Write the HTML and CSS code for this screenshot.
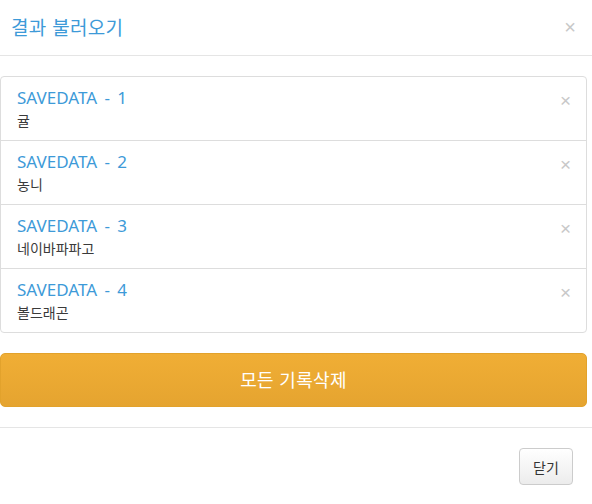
FILE: index.html
```html
<!DOCTYPE html>
<html lang="ko">
<head>
<meta charset="utf-8">
<link rel="stylesheet" href="styles.css">
</head>
<body>
<div class="modal">
  <div class="modal-header">
    <h4 class="modal-title">결과 불러오기</h4>
    <span class="close">×</span>
  </div>
  <div class="modal-body">
    <ul class="list-group">
      <li class="list-item">
        <div class="item-text">
          <div class="item-title">SAVEDATA - 1</div>
          <div class="item-sub">귤</div>
        </div>
        <span class="close item-close">×</span>
      </li>
      <li class="list-item">
        <div class="item-text">
          <div class="item-title">SAVEDATA - 2</div>
          <div class="item-sub">농니</div>
        </div>
        <span class="close item-close">×</span>
      </li>
      <li class="list-item">
        <div class="item-text">
          <div class="item-title">SAVEDATA - 3</div>
          <div class="item-sub">네이바파파고</div>
        </div>
        <span class="close item-close">×</span>
      </li>
      <li class="list-item">
        <div class="item-text">
          <div class="item-title">SAVEDATA - 4</div>
          <div class="item-sub">볼드래곤</div>
        </div>
        <span class="close item-close">×</span>
      </li>
    </ul>
    <button class="btn-warning">모든 기록삭제</button>
  </div>
  <div class="modal-footer">
    <button class="btn-default">닫기</button>
  </div>
</div>
</body>
</html>
```
FILE: styles.css
```css
* { box-sizing: border-box; }
html, body {
  margin: 0;
  padding: 0;
  background: #fff;
}
body {
  font-family: "Noto Sans", "Noto Sans CJK KR", sans-serif;
  color: #333;
}
.modal {
  width: 592px;
}
.modal-header {
  height: 56px;
  border-bottom: 1px solid #e5e5e5;
  display: flex;
  align-items: center;
  justify-content: space-between;
  padding: 0 16px 2px 11px;
}
.modal-title {
  margin: 0;
  font-size: 19px;
  font-weight: normal;
  color: #3d9ad8;
  font-family: "Noto Sans CJK KR", sans-serif;
  letter-spacing: 0.3px;
}
.close {
  font-family: "Liberation Sans", sans-serif;
  font-size: 20px;
  line-height: 1;
  color: #c8c8c8;
}
.modal-body {
  padding: 20px 5px 20px 0;
}
.list-group {
  list-style: none;
  margin: 0 0 20px 0;
  padding: 0;
  border: 1px solid #ddd;
  border-radius: 4px;
}
.list-item {
  display: flex;
  justify-content: space-between;
  align-items: flex-start;
  height: 64px;
  padding: 9px 15px 0 16px;
  border-top: 1px solid #ddd;
}
.list-item:first-child {
  border-top: none;
  height: 63px;
  padding-top: 9px;
}
.item-title {
  font-size: 17px;
  line-height: 24px;
  color: #3d9ad8;
  word-spacing: 3px;
}
.item-sub {
  font-family: "Noto Sans CJK KR", sans-serif;
  font-size: 14px;
  line-height: 20px;
  color: #3a3a3a;
}
.item-close {
  margin-top: 5px;
  font-size: 19px;
}
.btn-warning {
  display: block;
  width: 100%;
  height: 54px;
  border: 1px solid #e2a22c;
  border-radius: 5px;
  background: linear-gradient(to bottom, #f0ae35, #e5a430);
  color: #fff;
  font-family: "Noto Sans CJK KR", sans-serif;
  font-size: 18px;
  padding: 0 0 2px 0;
  letter-spacing: 0.3px;
}
.modal-footer {
  border-top: 1px solid #e5e5e5;
  display: flex;
  justify-content: flex-end;
  padding: 20px 19px 0 0;
}
.btn-default {
  width: 54px;
  height: 37px;
  border: 1px solid #ccc;
  border-radius: 4px;
  background: linear-gradient(to bottom, #fff, #ececec);
  color: #333;
  font-family: "Noto Sans CJK KR", sans-serif;
  font-size: 14px;
  padding: 0;
}
```
